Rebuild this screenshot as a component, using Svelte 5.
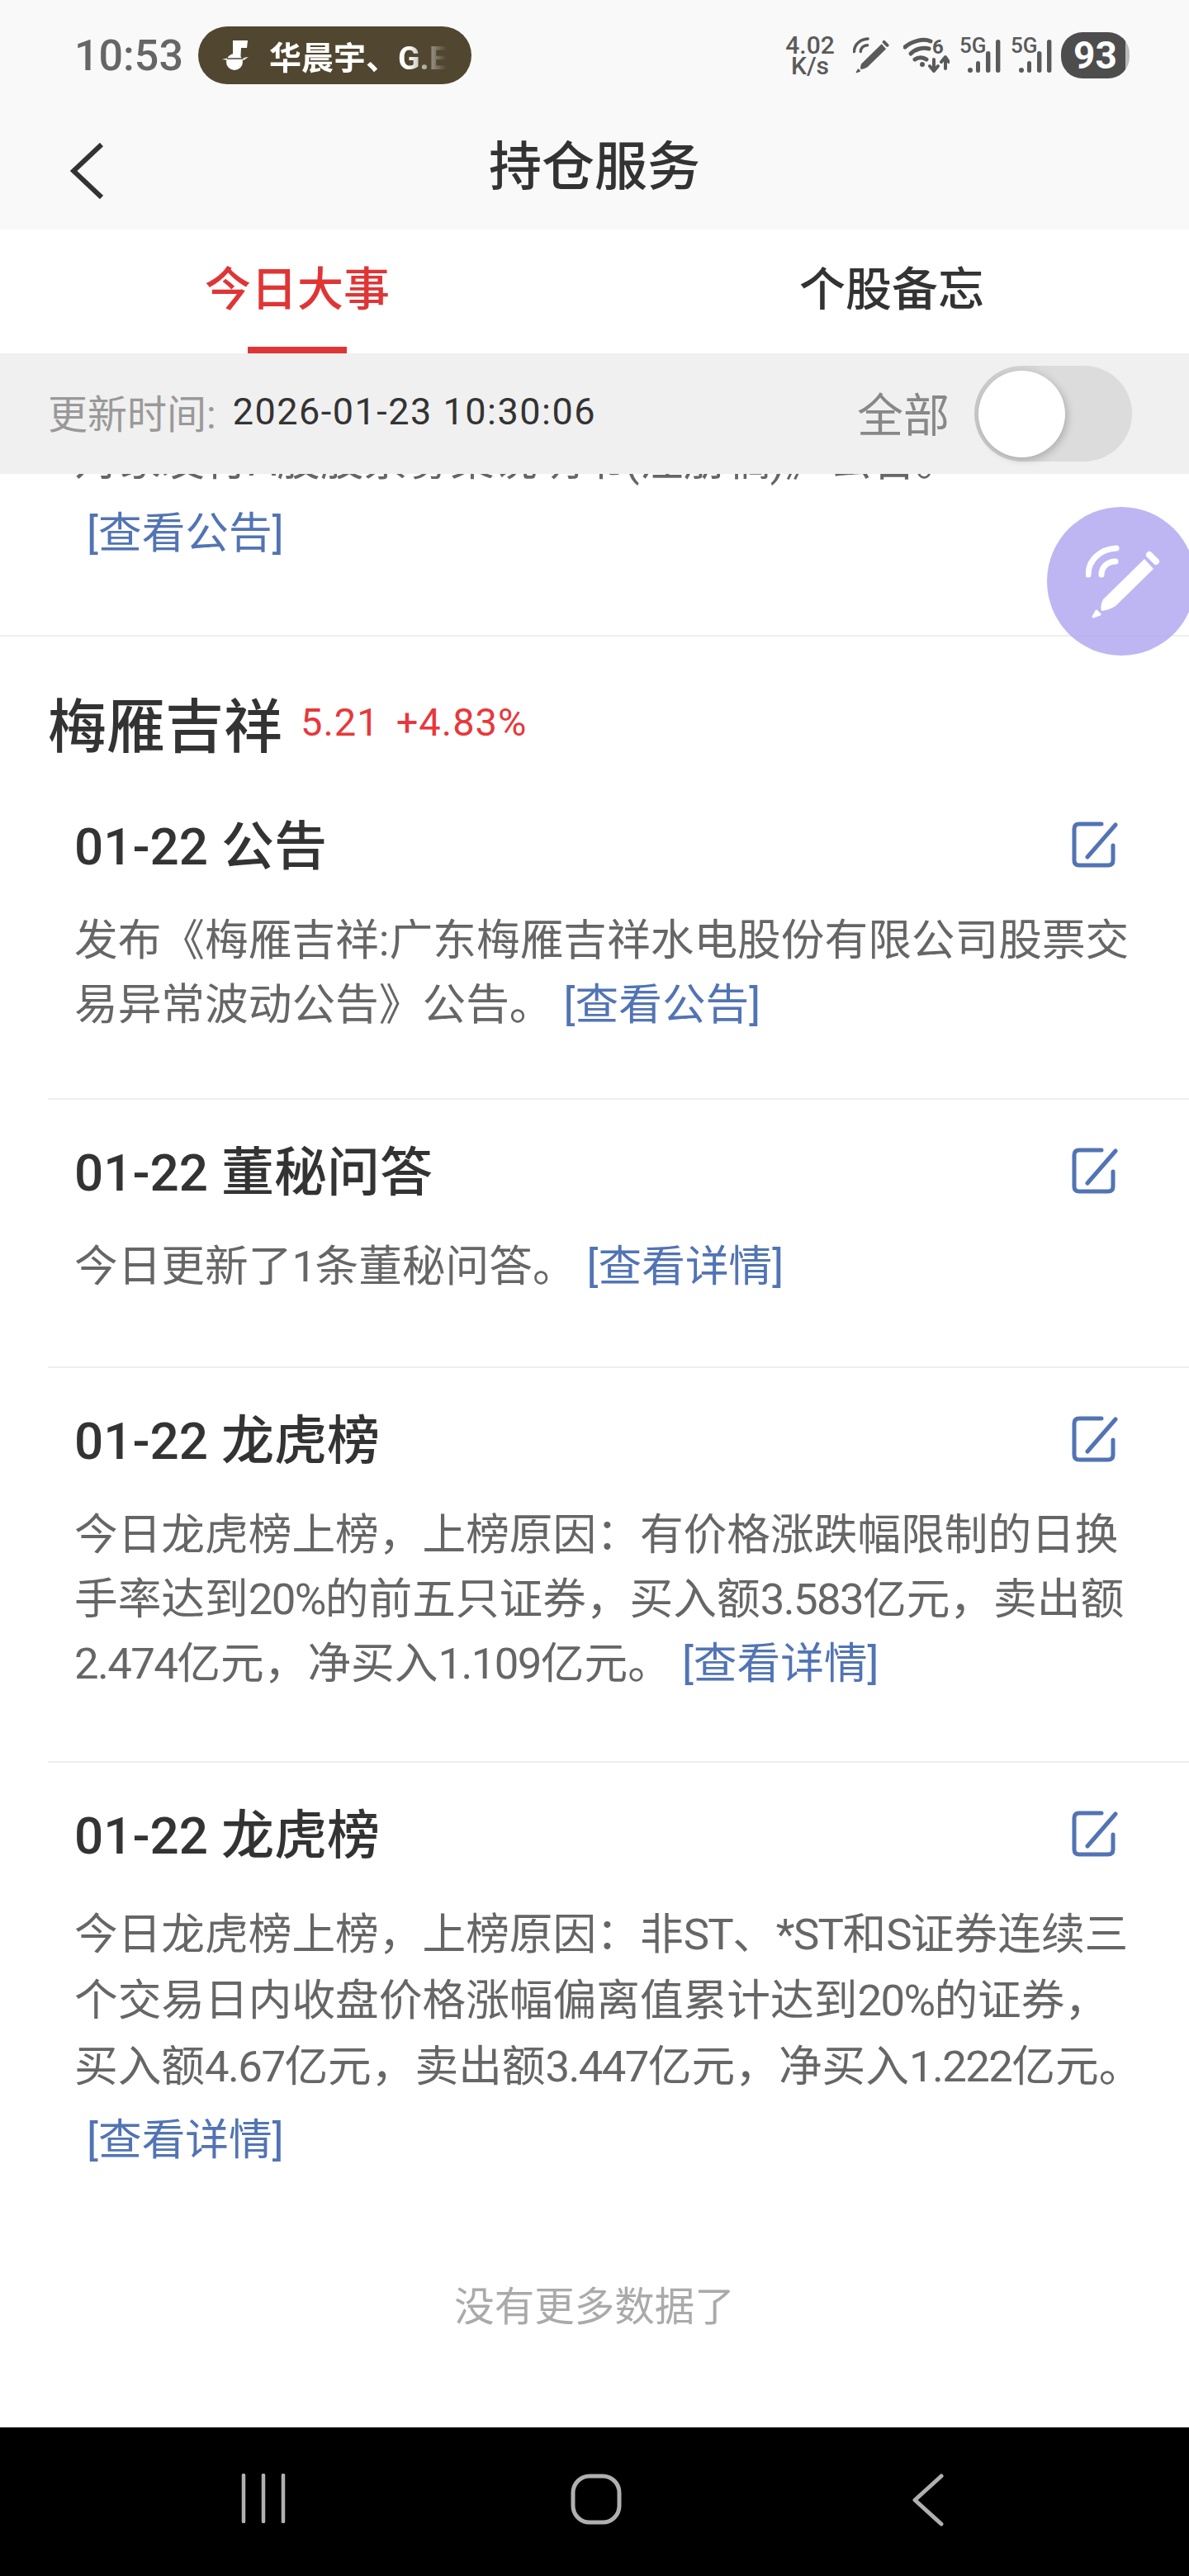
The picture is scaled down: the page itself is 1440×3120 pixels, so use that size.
<script lang="ts">
	const items = [
		{
			title: '公告',
			lines: ['发布《梅雁吉祥:广东梅雁吉祥水电股份有限公司股票交', '易异常波动公告》公告。'],
			link: '[查看公告]',
			tail: 74
		},
		{
			title: '董秘问答',
			lines: ['今日更新了1条董秘问答。'],
			link: '[查看详情]',
			tail: 82
		},
		{
			title: '龙虎榜',
			lines: [
				'今日龙虎榜上榜，上榜原因：有价格涨跌幅限制的日换',
				'手率达到20%的前五只证券，买入额3.583亿元，卖出额',
				'2.474亿元，净买入1.109亿元。'
			],
			link: '[查看详情]',
			tail: 79
		},
		{
			title: '龙虎榜',
			lines: [
				'今日龙虎榜上榜，上榜原因：非ST、*ST和S证券连续三',
				'个交易日内收盘价格涨幅偏离值累计达到20%的证券，',
				'买入额4.67亿元，卖出额3.447亿元，净买入1.222亿元。'
			],
			link: '[查看详情]',
			linkOnOwnLine: true,
			tail: 0
		}
	];

	let showAll = $state(false);

	// digits and latin letters run tighter than the CJK around them
	function runs(line: string) {
		return line.split(/([0-9A-Za-z.*%]+)/).map((text, i) => ({ text, latin: i % 2 === 1 }));
	}
</script>

{#snippet pen()}
	<svg class="pen" viewBox="0 0 90 90" aria-hidden="true">
		<path d="M71 17 L82 29 L36 74 Q28 79 19 80 Q17 74 21 66 Z" fill="currentColor" />
		<path d="M77 12 L85 20" stroke="currentColor" stroke-width="8" stroke-linecap="round" fill="none" />
		<path d="M9 87 L13 80 L17 84 Z" fill="currentColor" stroke="currentColor" stroke-width="3" stroke-linejoin="round" />
		<path d="M3 36 C3 18 18 5 37 4" stroke="currentColor" stroke-width="7" stroke-linecap="round" fill="none" />
		<path d="M19 36 C19 27 26 20 36 20" stroke="currentColor" stroke-width="7" stroke-linecap="round" fill="none" />
	</svg>
{/snippet}

{#snippet signal()}
	<svg class="signal" viewBox="0 0 50 46" aria-hidden="true">
		<text x="0" y="20" class="signal-label">5G</text>
		<circle cx="13" cy="41" r="3" fill="currentColor" />
		<rect x="20" y="30" width="5" height="14" rx="2.5" fill="currentColor" />
		<rect x="32" y="18" width="5.4" height="26" rx="2.7" fill="currentColor" />
		<rect x="44" y="4" width="5.4" height="40" rx="2.7" fill="currentColor" />
	</svg>
{/snippet}

<div class="page">
	<div class="top">
		<div class="status">
			<span class="time">10:53</span>
			<div class="pill">
				<svg class="note" viewBox="0 0 32 36" aria-hidden="true">
					<path d="M13 0 H31 L30 9 H23 L22 28 H13 Z" fill="#fff" />
					<ellipse cx="15" cy="26" rx="10" ry="10" fill="#fff" />
					<path d="M0 23 L8 21 H26 L32 20 L26 24 H8 Z" fill="#fff" />
					<path d="M6 22 H26" stroke="#51462f" stroke-width="1.5" />
				</svg>
				<span class="pill-text">华晨宇、G.E</span>
			</div>
			<div class="status-right">
				<div class="speed"><span>4.02</span><span>K/s</span></div>
				<div class="status-pen">{@render pen()}</div>
				<svg class="wifi" viewBox="0 0 56 44" aria-hidden="true">
					<g fill="none" stroke="currentColor" stroke-width="5" stroke-linecap="round">
						<path d="M2 12 C10 5 24 1 33 5" />
						<path d="M9 20 C15 14 24 12 31 14" />
						<path d="M14 27 C18 24 24 24 28 27" />
					</g>
					<circle cx="23" cy="33" r="3" fill="currentColor" />
					<text x="35" y="20" class="wifi-label">6</text>
					<g fill="none" stroke="currentColor" stroke-width="4" stroke-linecap="round" stroke-linejoin="round">
						<path d="M37 27 V40 M32 35 L37 41 L42 35" />
						<path d="M51 38 V25 M46 30 L51 24 L55 30" />
					</g>
				</svg>
				{@render signal()}
				{@render signal()}
				<div class="battery"><span>93</span></div>
			</div>
		</div>
		<header class="nav">
			<svg class="back" viewBox="0 0 40 68" aria-hidden="true">
				<path d="M38 2 L4 34 L38 66" fill="none" stroke="#333" stroke-width="6" />
			</svg>
			<h1>持仓服务</h1>
		</header>
	</div>

	<div class="tabs">
		<div class="tab active">今日大事</div>
		<div class="tab">个股备忘</div>
	</div>

	<div class="filter">
		<span class="updated">更新时间:</span>
		<span class="stamp">2026-01-23 10:30:06</span>
		<span class="all">全部</span>
		<button class="toggle" class:on={showAll} aria-label="全部" onclick={() => (showAll = !showAll)}>
			<span class="knob"></span>
		</button>
	</div>

	<main class="list">
		<section class="prev">
			<div class="body-line">对象发行A股股票募集说明书(注册稿)》公告。</div>
			<div class="own-line"><span class="link">[查看公告]</span></div>
		</section>

		<div class="stock">
			<h2>梅雁吉祥</h2>
			<span class="quote">5.21</span>
			<span class="quote">+4.83%</span>
		</div>

		{#each items as item, i}
			<article class="item" class:last={i === items.length - 1} style:padding-bottom="{item.tail}px">
				<div class="item-head">
					<h3><span class="date">01-22</span> {item.title}</h3>
					<svg class="edit" viewBox="0 0 56 56" aria-hidden="true">
						<path d="M36 3 H9 Q3 3 3 9 V47 Q3 53 9 53 H44 Q50 53 50 47 V29" fill="none" stroke="#5274b4" stroke-width="5" stroke-linecap="round" />
						<path d="M19 43 L53 4" fill="none" stroke="#5274b4" stroke-width="5" stroke-linecap="round" />
					</svg>
				</div>
				{#each item.lines as line, n}
					<div class="body-line">
						{#each runs(line) as run}{#if run.latin}<span class="latin">{run.text}</span>{:else}{run.text}{/if}{/each}{#if n === item.lines.length - 1 && !item.linkOnOwnLine}<span class="link">{item.link}</span>{/if}
					</div>
				{/each}
				{#if item.linkOnOwnLine}
					<div class="own-line"><span class="link">{item.link}</span></div>
				{/if}
			</article>
		{/each}

		<p class="no-more">没有更多数据了</p>
	</main>

	<div class="fab">{@render pen()}</div>

	<footer class="system-nav">
		<svg class="recent" viewBox="0 0 54 60" aria-hidden="true">
			<path d="M3 2 V58 M27 2 V58 M51 2 V58" stroke="#b0b0b0" stroke-width="4.5" stroke-linecap="round" />
		</svg>
		<svg class="home" viewBox="0 0 62 62" aria-hidden="true">
			<rect x="3" y="3" width="56" height="56" rx="20" fill="none" stroke="#b0b0b0" stroke-width="5" />
		</svg>
		<svg class="system-back" viewBox="0 0 40 64" aria-hidden="true">
			<path d="M36 3 L4 32 L36 61" fill="none" stroke="#b0b0b0" stroke-width="5" stroke-linecap="round" stroke-linejoin="round" />
		</svg>
	</footer>
</div>

<style>
	:global(body) {
		margin: 0;
		background: #fff;
	}

	.page {
		position: relative;
		display: flex;
		flex-direction: column;
		width: 1440px;
		height: 3120px;
		overflow: hidden;
		background: #fff;
		color: #333;
		font-family: Roboto, 'Noto Sans CJK SC', sans-serif;
	}

	.top {
		height: 278px;
		flex: none;
		background: #f9f9f9;
	}

	.status {
		display: flex;
		align-items: center;
		height: 70px;
		padding: 32px 72px 0 90px;
		color: #5a5a5a;
	}

	.time {
		width: 150px;
		font-size: 52px;
		font-weight: 500;
		color: #666;
	}

	.pill {
		display: flex;
		align-items: center;
		width: 331px;
		height: 70px;
		box-sizing: border-box;
		padding-left: 29px;
		border-radius: 35px;
		background: #51462f;
	}

	.note {
		width: 32px;
		height: 36px;
		flex: none;
	}

	.pill-text {
		width: 215px;
		margin-left: 25px;
		overflow: hidden;
		white-space: nowrap;
		font-size: 39px;
		font-weight: 700;
		color: #fff;
		mask-image: linear-gradient(to right, #000 78%, transparent 100%);
	}

	.status-right {
		display: flex;
		align-items: center;
		margin-left: auto;
	}

	.speed {
		display: flex;
		flex-direction: column;
		align-items: center;
		width: 56px;
		font-size: 30px;
		font-weight: 500;
		line-height: 25px;
	}

	.status-pen {
		width: 44px;
		height: 44px;
		margin-left: 24px;
	}

	.pen {
		display: block;
		width: 100%;
		height: 100%;
	}

	.wifi {
		width: 56px;
		height: 44px;
		margin-left: 17px;
	}

	.wifi-label {
		font-size: 24px;
		font-weight: 700;
		fill: currentColor;
	}

	.signal {
		width: 50px;
		height: 46px;
		margin-left: 12px;
	}

	.signal-label {
		font-size: 26px;
		font-weight: 500;
		fill: currentColor;
	}

	.battery {
		display: flex;
		align-items: center;
		justify-content: center;
		width: 83px;
		height: 56px;
		margin-left: 11px;
		border-radius: 26px;
		background: linear-gradient(to right, #4d4d4d 94%, #bbb 94%);
		color: #fff;
		font-size: 46px;
		font-weight: 700;
	}

	.nav {
		position: relative;
		display: flex;
		align-items: center;
		justify-content: center;
		height: 128px;
		margin-top: 30px;
	}

	.back {
		position: absolute;
		left: 85px;
		top: 41px;
		width: 40px;
		height: 68px;
	}

	h1 {
		margin: 0;
		font-size: 64px;
		font-weight: 500;
		color: #333;
	}

	.tabs {
		display: flex;
		flex: none;
		height: 150px;
	}

	.tab {
		position: relative;
		flex: 1;
		text-align: center;
		font-size: 56px;
		font-weight: 500;
		line-height: 146px;
		color: #333;
	}

	.tab.active {
		color: #e03535;
	}

	.tab.active::after {
		content: '';
		position: absolute;
		left: 300px;
		bottom: 0;
		width: 120px;
		height: 8px;
		background: #e03535;
	}

	.filter {
		position: relative;
		z-index: 1;
		display: flex;
		align-items: center;
		flex: none;
		height: 146px;
		padding: 0 71px 0 58px;
		background: #f0f0f0;
	}

	.updated,
	.stamp,
	.all {
		padding-bottom: 6px;
	}

	.updated {
		font-size: 48px;
		color: #999;
	}

	.stamp {
		margin-left: 20px;
		font-size: 45px;
		letter-spacing: 1.5px;
		color: #333;
	}

	.all {
		margin-left: auto;
		font-size: 56px;
		color: #888;
	}

	.toggle {
		display: flex;
		align-items: center;
		width: 191px;
		height: 116px;
		margin-left: 30px;
		margin-right: -2px;
		padding: 0 5px;
		border: 0;
		border-radius: 58px;
		background: linear-gradient(to right, #c8c8c8, #dcdcdc 50%);
	}

	.toggle.on {
		justify-content: flex-end;
		background: #e03535;
	}

	.knob {
		width: 105px;
		height: 105px;
		border-radius: 50%;
		background: #fff;
		box-shadow: 3px 3px 10px rgba(0, 0, 0, 0.2);
	}

	.list {
		flex: 1;
		min-height: 0;
		overflow: hidden;
	}

	.prev {
		margin-top: -55px;
		padding: 0 0 84px 90px;
		border-bottom: 2px solid #eee;
	}

	.body-line {
		height: 78px;
		font-size: 52.7px;
		line-height: 78px;
		white-space: nowrap;
		color: #666;
	}

	.last .body-line {
		height: 80px;
		line-height: 80px;
	}

	.latin {
		letter-spacing: -1.6px;
	}

	.own-line {
		height: 78px;
		margin-top: 10px;
		padding-left: 2px;
		font-size: 52.7px;
		line-height: 78px;
	}

	.link {
		margin-left: 13px;
		color: #5274b4;
	}

	.stock {
		display: flex;
		align-items: center;
		height: 96px;
		padding: 55px 0 0 58px;
		margin-bottom: 15px;
	}

	h2 {
		margin: 0 22px 0 0;
		font-size: 71px;
		font-weight: 500;
		color: #333;
	}

	.quote {
		margin-right: 20px;
		font-size: 47px;
		letter-spacing: 1px;
		color: #e8383c;
	}

	.item {
		margin-left: 58px;
		padding: 49px 0 0 32px;
		border-bottom: 2px solid #eee;
	}

	.item.last {
		border-bottom: 0;
	}

	.item-head {
		display: flex;
		align-items: center;
		justify-content: space-between;
		height: 80px;
		margin-bottom: 34px;
		padding-right: 86px;
	}

	.last .item-head {
		margin-bottom: 39px;
	}

	h3 {
		margin: 0;
		font-size: 64px;
		font-weight: 500;
		line-height: 80px;
		color: #333;
	}

	.date {
		font-size: 62px;
	}

	.edit {
		width: 56px;
		height: 56px;
		margin-bottom: 6px;
	}

	.no-more {
		margin: 124px 0 0;
		text-align: center;
		font-size: 48.5px;
		color: #aaa;
	}

	.fab {
		position: absolute;
		left: 1268px;
		top: 614px;
		z-index: 2;
		width: 180px;
		height: 180px;
		box-sizing: border-box;
		padding: 46px 43px 44px 47px;
		border-radius: 50%;
		background: rgba(176, 166, 240, 0.82);
		color: #fff;
	}

	.system-nav {
		position: relative;
		flex: none;
		height: 180px;
		background: #000;
	}

	.system-nav svg {
		position: absolute;
		top: 56px;
	}

	.recent {
		left: 292px;
		width: 54px;
		height: 60px;
	}

	.home {
		left: 691px;
		width: 62px;
		height: 62px;
	}

	.system-back {
		left: 1104px;
		width: 40px;
		height: 64px;
	}
</style>
